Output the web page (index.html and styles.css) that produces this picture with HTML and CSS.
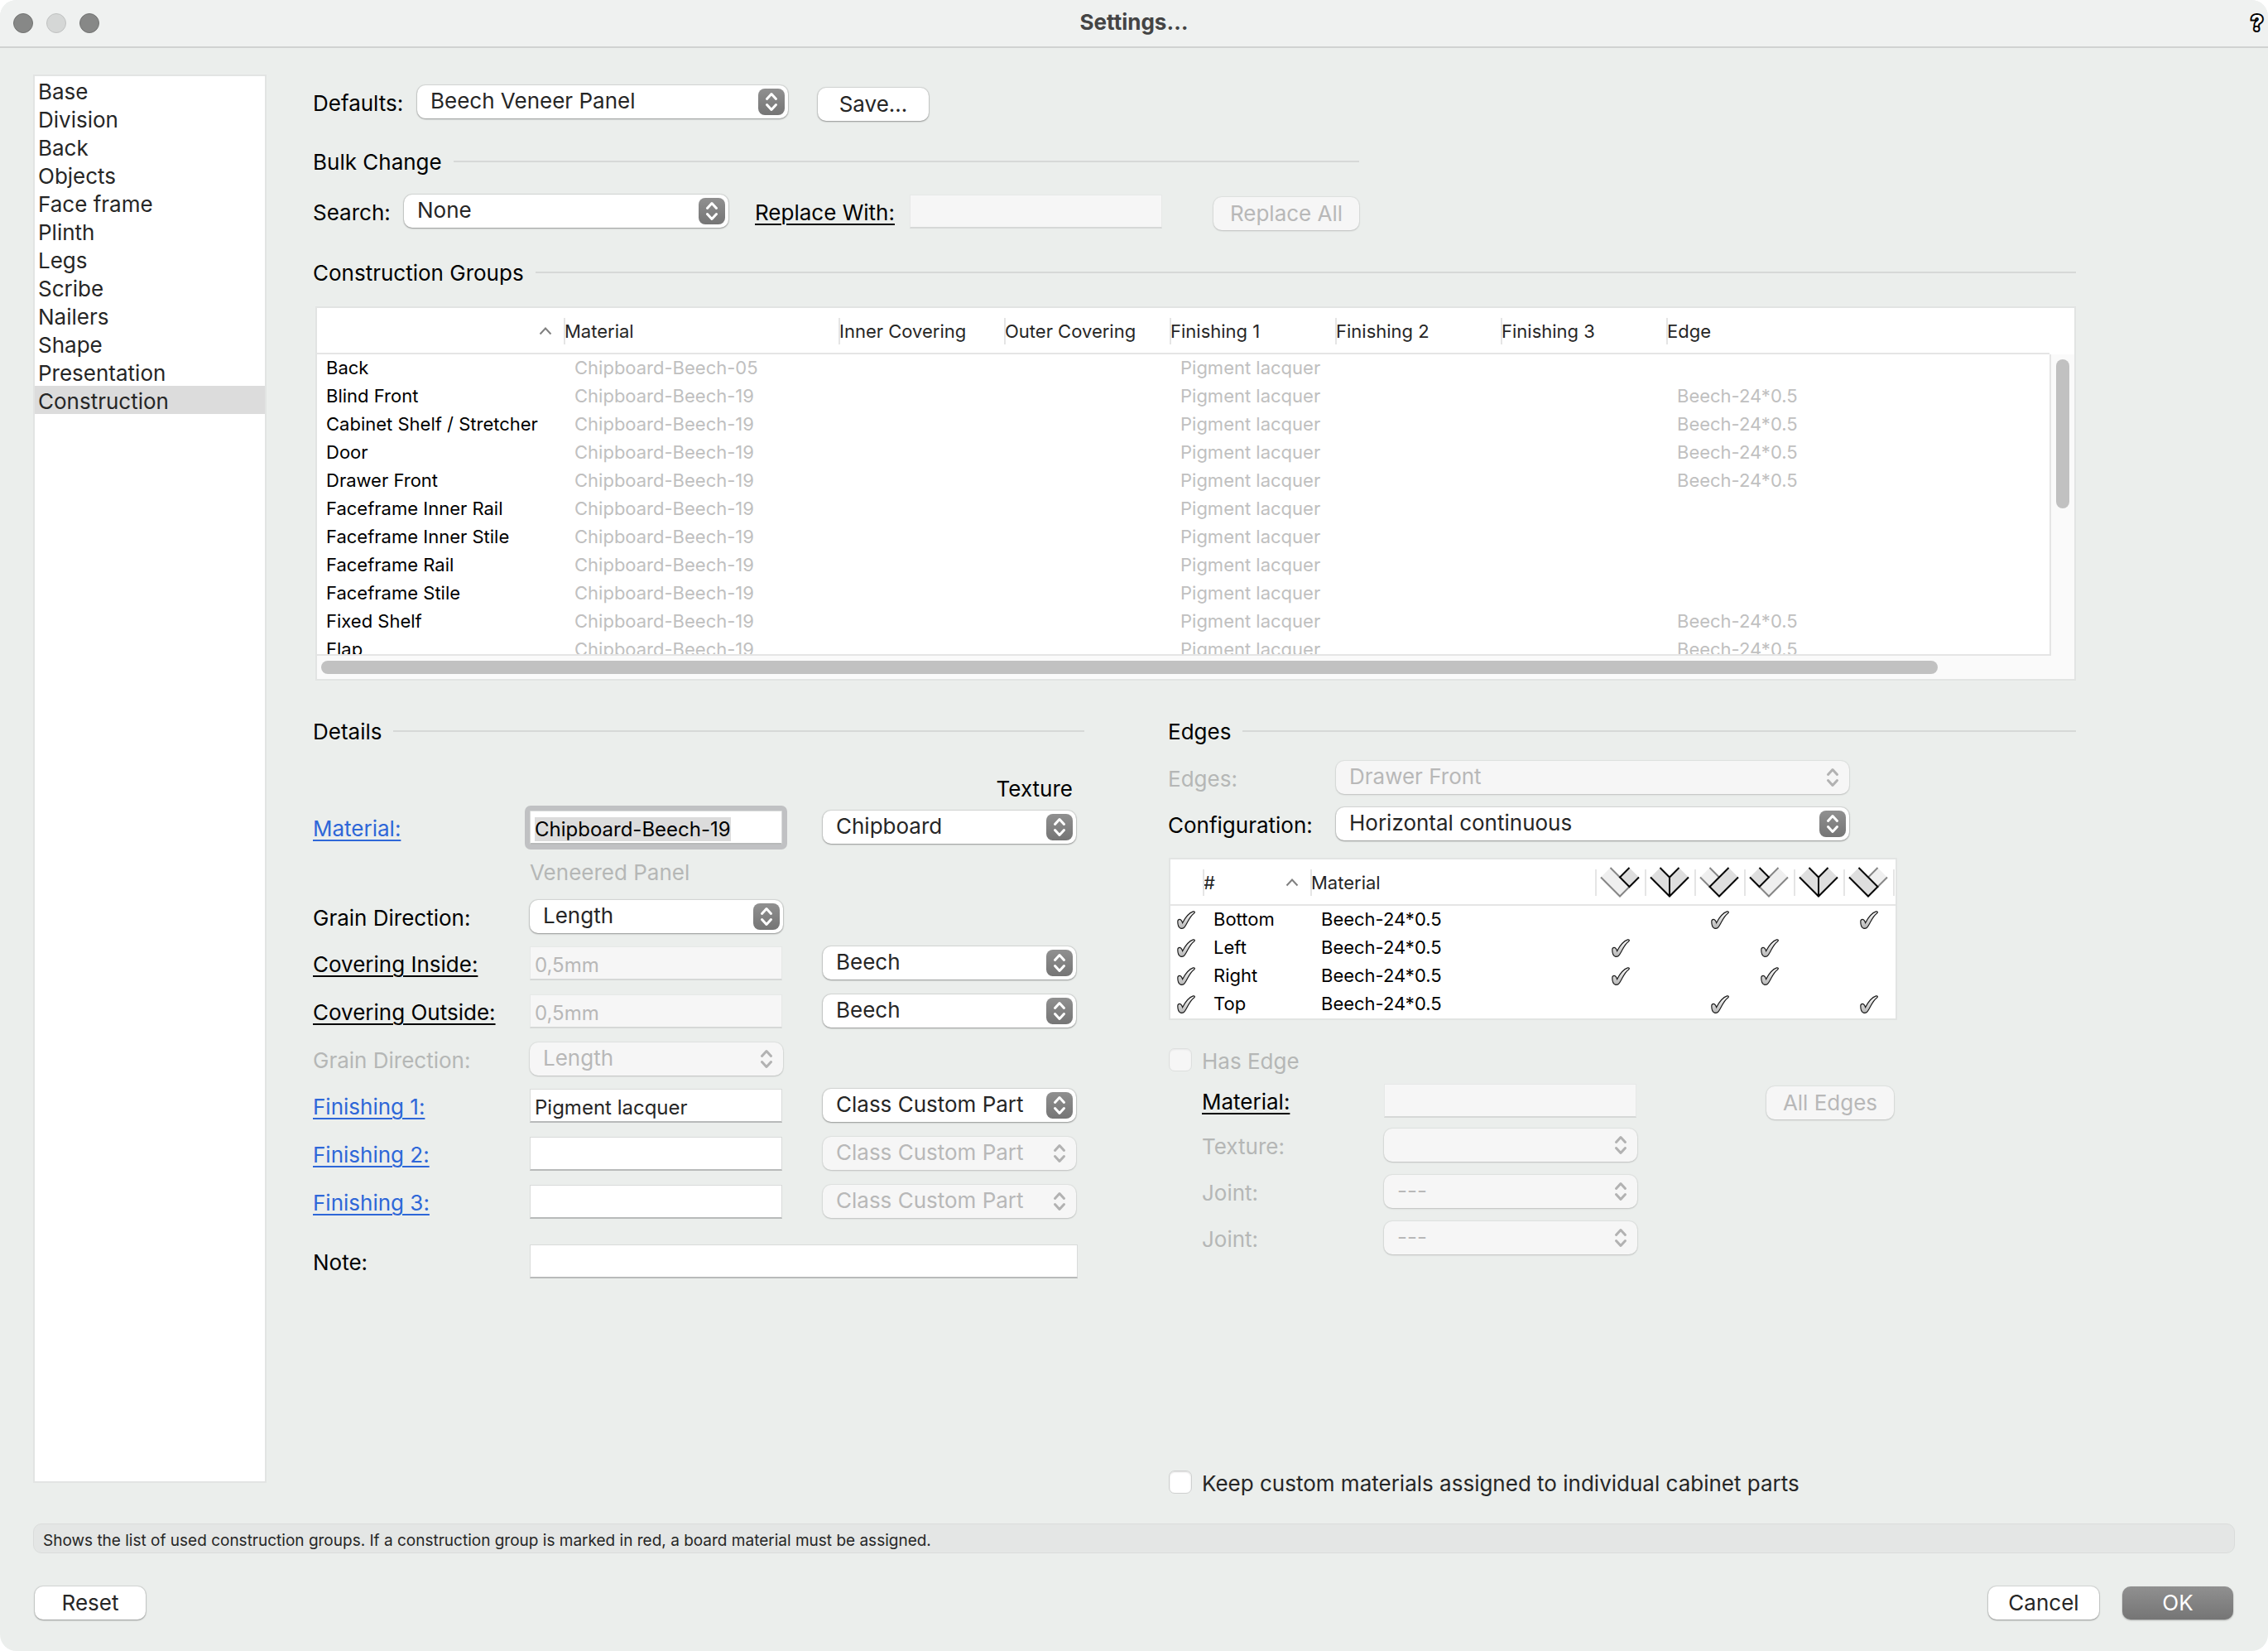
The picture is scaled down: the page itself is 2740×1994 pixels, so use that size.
FILE: index.html
```html
<!DOCTYPE html>
<html lang="en">
<head>
    <meta charset="UTF-8">
    <meta name="viewport" content="width=device-width, initial-scale=1.0">
    <title>Settings…</title>
    <link rel="stylesheet" href="styles.css">
</head>
<body>
    <!-- shared icons -->
    <svg class="icons" aria-hidden="true">
        <defs>
            <linearGradient id="checkFill" x1="0" y1="0" x2="0" y2="1">
                <stop offset="0" stop-color="#ffffff"/>
                <stop offset="1" stop-color="#b4b4b4"/>
            </linearGradient>
        </defs>
        <symbol id="updown" viewBox="0 0 32 32">
            <path d="M10.500 12.500L16 6.500L21.500 12.500M10.500 19.500L16 25.500L21.500 19.500"/>
        </symbol>
        <symbol id="sort" viewBox="0 0 16 10">
            <path d="M1.500 8.500L8 1.500L14.500 8.500" fill="none" stroke="#808080" stroke-width="2"/>
        </symbol>
        <symbol id="check" viewBox="0 0 22 22">
            <path d="M0.800 13C0.800 10.600 3 9.800 4.600 11C5.800 12 6.200 13.200 6.700 14.600C9.500 9 13.500 3 19.500 0.900C21.500 0.500 21.900 2 20.600 2.900C15.500 6.500 13.500 12.500 10.500 17.500C9 20.500 6.500 21.800 4.300 21.200C2 20.200 0.800 16 0.800 13Z" fill="url(#checkFill)" stroke="#1c1c1c" stroke-width="1.200"/>
        </symbol>
        <symbol id="joint-right-short" viewBox="-1 -1 48 37">
            <path class="dim-fill" d="M0 11.500L11.500 0L34.500 23L23 34.500Z"/>
            <path class="dark-fill" d="M34.500 0L23 11.500L34.500 23L46 11.500Z"/>
            <path class="dim-line" d="M11.500 0L23 11.500M0 11.500L23 34.500L34.500 23"/>
            <path class="dark-line" d="M34.500 0L23 11.500L34.500 23L46 11.500"/>
        </symbol>
        <symbol id="joint-mitre" viewBox="-1 -1 48 37">
            <path class="dark-fill" d="M0 11.500L11.500 0L23 11.500L34.500 0L46 11.500L23 34.500Z"/>
            <path class="dark-line" d="M11.500 0L23 11.500L34.500 0M0 11.500L23 34.500L46 11.500M23 11.500V34.500"/>
        </symbol>
        <symbol id="joint-right-long" viewBox="-1 -1 48 37">
            <path class="dim-fill" d="M0 11.500L11.500 0L23 11.500L11.500 23Z"/>
            <path class="dark-fill" d="M34.500 0L11.500 23L23 34.500L46 11.500Z"/>
            <path class="dim-line" d="M11.500 0L23 11.500M0 11.500L11.500 23"/>
            <path class="dark-line" d="M34.500 0L11.500 23L23 34.500L46 11.500"/>
        </symbol>
        <symbol id="joint-left-short" viewBox="-1 -1 48 37">
            <path class="dim-fill" d="M34.500 0L11.500 23L23 34.500L46 11.500Z"/>
            <path class="dark-fill" d="M0 11.500L11.500 0L23 11.500L11.500 23Z"/>
            <path class="dim-line" d="M34.500 0L23 11.500M11.500 23L23 34.500L46 11.500"/>
            <path class="dark-line" d="M11.500 0L23 11.500L11.500 23L0 11.500"/>
        </symbol>
        <symbol id="joint-left-long" viewBox="-1 -1 48 37">
            <path class="dim-fill" d="M34.500 0L23 11.500L34.500 23L46 11.500Z"/>
            <path class="dark-fill" d="M0 11.500L11.500 0L34.500 23L23 34.500Z"/>
            <path class="dim-line" d="M34.500 0L23 11.500M46 11.500L34.500 23"/>
            <path class="dark-line" d="M11.500 0L34.500 23L23 34.500L0 11.500"/>
        </symbol>
    </svg>

    <div class="window">
        <header class="titlebar">
            <div class="lights">
                <button class="light" aria-label="Close"></button>
                <button class="light off" aria-label="Minimize" disabled></button>
                <button class="light" aria-label="Zoom"></button>
            </div>
            <h1>Settings…</h1>
            <button class="help" aria-label="Help">?</button>
        </header>

        <div class="content">
            <nav class="sidebar">
                <a href="#base">Base</a>
                <a href="#division">Division</a>
                <a href="#back">Back</a>
                <a href="#objects">Objects</a>
                <a href="#faceframe">Face frame</a>
                <a href="#plinth">Plinth</a>
                <a href="#legs">Legs</a>
                <a href="#scribe">Scribe</a>
                <a href="#nailers">Nailers</a>
                <a href="#shape">Shape</a>
                <a href="#presentation">Presentation</a>
                <a href="#construction" class="active">Construction</a>
            </nav>

            <main>
                <div class="row">
                    <label for="defaults">Defaults:</label>
                    <span class="popup defaults">
                        <select id="defaults"><option>Beech Veneer Panel</option></select>
                        <svg><use href="#updown"/></svg>
                    </span>
                    <button class="btn save">Save…</button>
                </div>

                <section class="bulk">
                    <h2>Bulk Change</h2>
                    <div class="row">
                        <label for="search">Search:</label>
                        <span class="popup search">
                            <select id="search"><option>None</option></select>
                            <svg><use href="#updown"/></svg>
                        </span>
                        <a href="#replace" class="label">Replace With:</a>
                        <input type="text" class="replace" aria-label="Replace With" disabled>
                        <button class="btn replace-all" disabled>Replace All</button>
                    </div>
                </section>

                <section class="groups">
                    <h2>Construction Groups</h2>
                    <div class="grid-box">
                        <div class="scroller">
                            <table class="list groups-table">
                                <colgroup>
                                    <col class="c-name"><col class="c-material"><col class="c-std"><col class="c-std"><col class="c-std"><col class="c-std"><col class="c-std"><col>
                                </colgroup>
                                <thead>
                                    <tr>
                                        <th><svg class="sort"><use href="#sort"/></svg></th>
                                        <th>Material</th>
                                        <th>Inner Covering</th>
                                        <th>Outer Covering</th>
                                        <th>Finishing 1</th>
                                        <th>Finishing 2</th>
                                        <th>Finishing 3</th>
                                        <th>Edge</th>
                                    </tr>
                                </thead>
                                <tbody>
                                    <tr><td>Back</td><td>Chipboard-Beech-05</td><td></td><td></td><td>Pigment lacquer</td><td></td><td></td><td></td></tr>
                                    <tr><td>Blind Front</td><td>Chipboard-Beech-19</td><td></td><td></td><td>Pigment lacquer</td><td></td><td></td><td>Beech-24*0.5</td></tr>
                                    <tr><td>Cabinet Shelf / Stretcher</td><td>Chipboard-Beech-19</td><td></td><td></td><td>Pigment lacquer</td><td></td><td></td><td>Beech-24*0.5</td></tr>
                                    <tr><td>Door</td><td>Chipboard-Beech-19</td><td></td><td></td><td>Pigment lacquer</td><td></td><td></td><td>Beech-24*0.5</td></tr>
                                    <tr><td>Drawer Front</td><td>Chipboard-Beech-19</td><td></td><td></td><td>Pigment lacquer</td><td></td><td></td><td>Beech-24*0.5</td></tr>
                                    <tr><td>Faceframe Inner Rail</td><td>Chipboard-Beech-19</td><td></td><td></td><td>Pigment lacquer</td><td></td><td></td><td></td></tr>
                                    <tr><td>Faceframe Inner Stile</td><td>Chipboard-Beech-19</td><td></td><td></td><td>Pigment lacquer</td><td></td><td></td><td></td></tr>
                                    <tr><td>Faceframe Rail</td><td>Chipboard-Beech-19</td><td></td><td></td><td>Pigment lacquer</td><td></td><td></td><td></td></tr>
                                    <tr><td>Faceframe Stile</td><td>Chipboard-Beech-19</td><td></td><td></td><td>Pigment lacquer</td><td></td><td></td><td></td></tr>
                                    <tr><td>Fixed Shelf</td><td>Chipboard-Beech-19</td><td></td><td></td><td>Pigment lacquer</td><td></td><td></td><td>Beech-24*0.5</td></tr>
                                    <tr><td>Flap</td><td>Chipboard-Beech-19</td><td></td><td></td><td>Pigment lacquer</td><td></td><td></td><td>Beech-24*0.5</td></tr>
                                </tbody>
                            </table>
                        </div>
                        <div class="vbar"><div class="track"><div class="thumb"></div></div></div>
                        <div class="hbar"><div class="thumb"></div></div>
                    </div>
                </section>

                <div class="columns">
                    <section class="details">
                        <h2>Details</h2>
                        <p class="texture-head">Texture</p>
                        <div class="form">
                            <a href="#material" class="label blue">Material:</a>
                            <input type="text" id="material" class="focused" value="Chipboard-Beech-19" aria-label="Material">
                            <span class="popup">
                                <select aria-label="Material texture"><option>Chipboard</option></select>
                                <svg><use href="#updown"/></svg>
                            </span>

                            <span class="label muted second">Veneered Panel</span>

                            <label for="grain" class="first">Grain Direction:</label>
                            <span class="popup">
                                <select id="grain"><option>Length</option></select>
                                <svg><use href="#updown"/></svg>
                            </span>

                            <a href="#inside" class="label first">Covering Inside:</a>
                            <input type="text" value="0,5mm" aria-label="Covering Inside" disabled>
                            <span class="popup">
                                <select aria-label="Covering Inside texture"><option>Beech</option></select>
                                <svg><use href="#updown"/></svg>
                            </span>

                            <a href="#outside" class="label first">Covering Outside:</a>
                            <input type="text" value="0,5mm" aria-label="Covering Outside" disabled>
                            <span class="popup">
                                <select aria-label="Covering Outside texture"><option>Beech</option></select>
                                <svg><use href="#updown"/></svg>
                            </span>

                            <label for="grain2" class="muted first">Grain Direction:</label>
                            <span class="popup">
                                <select id="grain2" disabled><option>Length</option></select>
                                <svg><use href="#updown"/></svg>
                            </span>

                            <a href="#finishing1" class="label blue first">Finishing 1:</a>
                            <input type="text" value="Pigment lacquer" aria-label="Finishing 1">
                            <span class="popup">
                                <select aria-label="Finishing 1 texture"><option>Class Custom Part</option></select>
                                <svg><use href="#updown"/></svg>
                            </span>

                            <a href="#finishing2" class="label blue first">Finishing 2:</a>
                            <input type="text" aria-label="Finishing 2">
                            <span class="popup">
                                <select aria-label="Finishing 2 texture" disabled><option>Class Custom Part</option></select>
                                <svg><use href="#updown"/></svg>
                            </span>

                            <a href="#finishing3" class="label blue first">Finishing 3:</a>
                            <input type="text" aria-label="Finishing 3">
                            <span class="popup">
                                <select aria-label="Finishing 3 texture" disabled><option>Class Custom Part</option></select>
                                <svg><use href="#updown"/></svg>
                            </span>

                            <label for="note" class="first">Note:</label>
                            <input type="text" id="note" class="wide">
                        </div>
                    </section>

                    <section class="edges">
                        <h2>Edges</h2>
                        <div class="form edge-select">
                            <label for="edges" class="muted">Edges:</label>
                            <span class="popup">
                                <select id="edges" disabled><option>Drawer Front</option></select>
                                <svg><use href="#updown"/></svg>
                            </span>
                            <label for="configuration">Configuration:</label>
                            <span class="popup">
                                <select id="configuration"><option>Horizontal continuous</option></select>
                                <svg><use href="#updown"/></svg>
                            </span>
                        </div>

                        <div class="edge-box">
                            <table class="list edge-table">
                                <colgroup>
                                    <col class="e-used"><col class="e-name"><col class="e-material"><col span="6" class="e-joint"><col>
                                </colgroup>
                                <thead>
                                    <tr>
                                        <th></th>
                                        <th><span class="sorted"># <svg class="sort"><use href="#sort"/></svg></span></th>
                                        <th>Material</th>
                                        <th><svg class="joint"><use href="#joint-right-short"/></svg></th>
                                        <th><svg class="joint"><use href="#joint-mitre"/></svg></th>
                                        <th><svg class="joint"><use href="#joint-right-long"/></svg></th>
                                        <th><svg class="joint"><use href="#joint-left-short"/></svg></th>
                                        <th><svg class="joint"><use href="#joint-mitre"/></svg></th>
                                        <th><svg class="joint"><use href="#joint-left-long"/></svg></th>
                                        <th></th>
                                    </tr>
                                </thead>
                                <tbody>
                                    <tr>
                                        <td class="tick"><svg><use href="#check"/></svg></td><td>Bottom</td><td>Beech-24*0.5</td>
                                        <td></td><td></td><td class="tick"><svg><use href="#check"/></svg></td>
                                        <td></td><td></td><td class="tick"><svg><use href="#check"/></svg></td><td></td>
                                    </tr>
                                    <tr>
                                        <td class="tick"><svg><use href="#check"/></svg></td><td>Left</td><td>Beech-24*0.5</td>
                                        <td class="tick"><svg><use href="#check"/></svg></td><td></td><td></td>
                                        <td class="tick"><svg><use href="#check"/></svg></td><td></td><td></td><td></td>
                                    </tr>
                                    <tr>
                                        <td class="tick"><svg><use href="#check"/></svg></td><td>Right</td><td>Beech-24*0.5</td>
                                        <td class="tick"><svg><use href="#check"/></svg></td><td></td><td></td>
                                        <td class="tick"><svg><use href="#check"/></svg></td><td></td><td></td><td></td>
                                    </tr>
                                    <tr>
                                        <td class="tick"><svg><use href="#check"/></svg></td><td>Top</td><td>Beech-24*0.5</td>
                                        <td></td><td></td><td class="tick"><svg><use href="#check"/></svg></td>
                                        <td></td><td></td><td class="tick"><svg><use href="#check"/></svg></td><td></td>
                                    </tr>
                                </tbody>
                            </table>
                        </div>

                        <div class="check-row has-edge">
                            <input type="checkbox" id="hasEdge" disabled>
                            <label for="hasEdge" class="muted">Has Edge</label>
                        </div>
                        <div class="form edge-form">
                            <a href="#edgeMaterial" class="label">Material:</a>
                            <input type="text" id="edgeMaterial" aria-label="Edge material" disabled>
                            <button class="btn all-edges" disabled>All Edges</button>

                            <label for="edgeTexture" class="muted first">Texture:</label>
                            <span class="popup">
                                <select id="edgeTexture" disabled><option></option></select>
                                <svg><use href="#updown"/></svg>
                            </span>

                            <label for="joint1" class="muted first">Joint:</label>
                            <span class="popup">
                                <select id="joint1" disabled><option>---</option></select>
                                <svg><use href="#updown"/></svg>
                            </span>

                            <label for="joint2" class="muted first">Joint:</label>
                            <span class="popup">
                                <select id="joint2" disabled><option>---</option></select>
                                <svg><use href="#updown"/></svg>
                            </span>
                        </div>

                        <div class="check-row keep">
                            <input type="checkbox" id="keep">
                            <label for="keep">Keep custom materials assigned to individual cabinet parts</label>
                        </div>
                    </section>
                </div>
            </main>
        </div>

        <p class="hint">Shows the list of used construction groups. If a construction group is marked in red, a board material must be assigned.</p>

        <footer>
            <button class="btn">Reset</button>
            <button class="btn cancel">Cancel</button>
            <button class="btn primary">OK</button>
        </footer>
    </div>

    <script>
        var material=document.getElementById("material");
        material.focus();
        material.select();
    </script>
</body>
</html>
```
FILE: styles.css
```css
*
{
    box-sizing: border-box;
}
body
{
    margin: 0;
    background-color: white;
    font-family: Inter, "Liberation Sans", sans-serif;
    font-size: 26px;
    font-variant-ligatures: no-contextual;
    color: black;
}
button, input, select
{
    font-family: inherit;
    font-size: inherit;
    margin: 0;
}
.icons
{
    position: absolute;
    width: 0;
    height: 0;
}
.window
{
    display: flex;
    flex-direction: column;
    min-height: 100vh;
    border-radius: 20px;
    overflow: hidden;
    background-color: #ebeeec;
}

/* title bar */
.titlebar
{
    display: grid;
    grid-template-columns: 1fr auto 1fr;
    align-items: center;
    height: 58px;
    border-bottom: 2px solid #d0d2d1;
    background-color: #eff1f0;
}
.titlebar h1
{
    margin: 0;
    padding-bottom: 2px;
    font-size: 26px;
    line-height: 32px;
    font-weight: 700;
    color: #444;
}
.lights
{
    display: flex;
    gap: 16px;
    padding-left: 16px;
}
.light
{
    width: 24px;
    height: 24px;
    padding: 0;
    border: 1px solid #727372;
    border-radius: 50%;
    background-color: #878887;
}
.light.off
{
    border-color: #bfc1c0;
    background-color: #d5d7d6;
}
.help
{
    justify-self: end;
    padding: 0 6px 0 0;
    border: none;
    background: none;
    font-size: 26px;
    line-height: 32px;
    font-weight: 700;
    color: white;
    -webkit-text-stroke: 4px black;
    paint-order: stroke fill;
}

.content
{
    display: flex;
    flex: 1;
    gap: 56px;
    padding: 32px 40px 0 40px;
}

/* sidebar */
.sidebar
{
    flex: none;
    width: 282px;
    margin-bottom: 19px;
    border: 2px solid #e2e4e3;
    background-color: white;
}
.sidebar a
{
    display: block;
    height: 34px;
    padding: 2px 4px 0;
    line-height: 34px;
    color: #262626;
    text-decoration: none;
}
.sidebar .active
{
    background-color: #dcdcdc;
}

main
{
    display: flex;
    flex-direction: column;
    flex: 1;
    padding: 13px 192px 0 0;
}
h2
{
    display: flex;
    align-items: center;
    gap: 14px;
    height: 32px;
    margin: 0;
    font-size: 26px;
    font-weight: 400;
    line-height: 34px;
}
h2::after
{
    content: "";
    flex: 1;
    height: 2px;
    margin-bottom: 3px;
    background-color: #d6d8d7;
}

/* controls */
.row
{
    display: flex;
    align-items: flex-start;
    height: 40px;
}
label, .label
{
    height: 40px;
    padding-top: 2px;
    line-height: 40px;
    white-space: nowrap;
    color: black;
}
a.label
{
    justify-self: start;
    text-decoration: underline;
    text-decoration-thickness: 2px;
    text-underline-offset: 4px;
}
.label.blue
{
    color: #2e67d8;
}
label.muted, .label.muted
{
    color: #b5b7b6;
}
.popup
{
    position: relative;
    display: block;
    height: 40px;
}
.popup select
{
    appearance: none;
    display: block;
    width: 100%;
    height: 40px;
    padding: 0 40px 3px 16px;
    border: none;
    border-radius: 10px;
    background-color: white;
    box-shadow: 0 0 1px 1px rgba(0, 0, 0, 0.1), 0 1px 2px rgba(0, 0, 0, 0.3);
    color: #262626;
    opacity: 1;
}
.popup svg
{
    position: absolute;
    top: 4px;
    right: 4px;
    width: 32px;
    height: 32px;
    border-radius: 8px;
    background-image: linear-gradient(#909090, #757575);
    fill: none;
    stroke: white;
    stroke-width: 3px;
    stroke-linecap: round;
    stroke-linejoin: round;
    pointer-events: none;
}
.popup select:disabled
{
    background-color: #f6f6f6;
    box-shadow: 0 0 1px 1px rgba(0, 0, 0, 0.05), 0 1px 2px rgba(0, 0, 0, 0.15);
    color: #b8b8b8;
}
.popup select:disabled + svg
{
    background-image: none;
    stroke: #b2b2b2;
}
input[type="text"]
{
    width: 305px;
    height: 41px;
    padding: 4px 5px 0;
    border: 1px solid #d9dbda;
    border-bottom: 2px solid #b8baba;
    background-color: white;
    font-size: 24px;
    color: #262626;
}
input[type="text"]:disabled
{
    border-color: #e6e8e7;
    border-bottom-color: #d6d8d7;
    background-color: #f6f6f6;
    color: #b8b8b8;
}
input.focused
{
    outline: 6px solid #c0c1c3;
    border-radius: 1px;
    color: black;
}
input.focused::selection
{
    background-color: #dcdcdc;
    color: black;
}
input[type="checkbox"]
{
    appearance: none;
    width: 28px;
    height: 28px;
    border: 1px solid #cfd1d0;
    border-radius: 7px;
    background-color: white;
    box-shadow: inset 0 1px 2px rgba(0, 0, 0, 0.15);
}
input[type="checkbox"]:disabled
{
    border-color: #dddfde;
    background-color: #f6f6f6;
    box-shadow: inset 0 1px 2px rgba(0, 0, 0, 0.06);
}
.btn
{
    height: 40px;
    min-width: 134px;
    padding: 0 0 1px;
    border: none;
    border-radius: 10px;
    background-color: white;
    box-shadow: 0 0 1px 1px rgba(0, 0, 0, 0.1), 0 1px 2px rgba(0, 0, 0, 0.3);
    color: #262626;
}
.btn:disabled
{
    background-color: #f6f6f6;
    box-shadow: 0 0 1px 1px rgba(0, 0, 0, 0.05), 0 1px 2px rgba(0, 0, 0, 0.15);
    color: #b8b8b8;
}
.btn.primary
{
    background-image: linear-gradient(#909090, #757575);
    box-shadow: 0 1px 2px rgba(0, 0, 0, 0.3);
    color: white;
}
.row .btn, .form .btn
{
    margin-top: 3px;
}

/* top rows */
.row label
{
    flex: none;
}
.row label[for="defaults"]
{
    width: 126px;
}
.row label[for="search"]
{
    width: 110px;
}
.defaults
{
    width: 448px;
    margin-right: 36px;
}
.search
{
    width: 392px;
    margin-right: 32px;
}
.bulk
{
    width: 1264px;
    margin-top: 37px;
}
.bulk .row
{
    margin-top: 23px;
}
.bulk .replace
{
    margin: 0 62px 0 auto;
}
.btn.replace-all
{
    width: 176px;
}

/* tables */
.groups
{
    margin-top: 39px;
}
.grid-box
{
    display: grid;
    grid-template-columns: 1fr 30px;
    margin: 24px 0 0 3px;
    border: 2px solid #e2e4e3;
    background-color: #fafafa;
}
.scroller
{
    height: 420px;
    overflow: hidden;
    border-bottom: 2px solid #e5e5e5;
    background-color: white;
}
.list
{
    table-layout: fixed;
    width: 100%;
    border-spacing: 0;
    font-size: 22px;
    background-color: white;
}
.list th
{
    position: relative;
    height: 56px;
    padding: 2px 0 0 1px;
    border-bottom: 2px solid #e5e5e5;
    font-weight: 400;
    text-align: left;
    white-space: nowrap;
    color: #262626;
}
.list th + th::before
{
    content: "";
    position: absolute;
    top: 12px;
    left: 0;
    width: 2px;
    height: 32px;
    background-color: #e5e5e5;
}
.list td
{
    height: 34px;
    padding: 0 0 2px 13px;
    line-height: 32px;
    white-space: nowrap;
}
.groups-table td:first-child
{
    padding-left: 11px;
}
.groups-table td + td
{
    color: #c0c0c0;
}
.c-name
{
    width: 298px;
}
.c-material
{
    width: 332px;
}
.c-std
{
    width: 200px;
}
.sort
{
    display: block;
    width: 16px;
    height: 10px;
    margin: 0 14px 0 auto;
}
.vbar
{
    padding-top: 56px;
    background-color: white;
}
.track
{
    height: 100%;
    padding: 6px 0 0 6px;
    border-left: 2px solid #e5e5e5;
    background-color: #fafafa;
}
.thumb
{
    border-radius: 8px;
    background-color: #c1c1c1;
}
.vbar .thumb
{
    width: 16px;
    height: 180px;
}
.hbar
{
    grid-column: 1 / 3;
    height: 28px;
    padding: 6px 165px 0 5px;
}
.hbar .thumb
{
    height: 16px;
}

/* details and edges */
.columns
{
    display: grid;
    grid-template-columns: 932px 1fr;
    gap: 101px;
    flex: 1;
    margin-top: 46px;
}
.form
{
    display: grid;
    align-items: start;
}
.form .first
{
    grid-column: 1;
}
.form .second
{
    grid-column: 2;
}
.texture-head
{
    width: 918px;
    margin: 32px 0 5px;
    line-height: 42px;
    text-align: right;
}
.details .form
{
    grid-template-columns: 262px 354px 306px;
    grid-template-rows: 53px 55px 56px 58px 58px 56px 58px 58px 72px 40px;
}
.details .popup
{
    width: 306px;
}
.details .form .wide
{
    grid-column: 2 / 4;
    width: 662px;
}
.edges
{
    display: flex;
    flex-direction: column;
}
.edge-select
{
    grid-template-columns: 203px 620px;
    row-gap: 16px;
    margin-top: 19px;
}
.edge-box
{
    width: 880px;
    margin: 21px 0 0 1px;
    border: 2px solid #e2e4e3;
}
.e-used
{
    width: 39px;
}
.e-name
{
    width: 130px;
}
.e-material
{
    width: 344px;
}
.e-joint
{
    width: 60px;
}
.sorted
{
    display: flex;
    align-items: center;
}
.joint
{
    display: block;
    width: 48px;
    height: 37px;
    margin: 0 auto 1px 5px;
    fill: none;
    stroke-width: 2px;
}
.dim-fill
{
    fill: #efefef;
    stroke: none;
}
.dark-fill
{
    fill: #dedede;
    stroke: none;
}
.dim-line
{
    stroke: #858585;
}
.dark-line
{
    stroke: black;
}
.list .tick
{
    padding: 0 0 0 20px;
}
.list .tick:first-child
{
    padding-left: 8px;
}
.tick svg
{
    display: block;
    width: 22px;
    height: 22px;
}
.check-row
{
    display: flex;
    align-items: center;
    gap: 12px;
    padding-left: 1px;
}
.has-edge
{
    margin-top: 28px;
}
.edge-form
{
    grid-template-columns: 220px 462px 154px;
    grid-template-rows: 54px 56px 56px 40px;
    margin: 9px 0 0 41px;
}
.edge-form .popup
{
    width: 306px;
}
.keep
{
    margin-top: auto;
}
.keep label
{
    color: #262626;
}

/* bottom */
.hint
{
    height: 36px;
    margin: 30px 40px 0;
    padding: 3px 11px 0;
    border: 1px solid #dadcdb;
    border-radius: 10px;
    background-color: #e4e6e5;
    font-size: 19px;
    line-height: 34px;
    color: #262626;
}
footer
{
    display: flex;
    gap: 28px;
    padding: 40px 42px 38px;
}
.cancel
{
    margin-left: auto;
}
```
